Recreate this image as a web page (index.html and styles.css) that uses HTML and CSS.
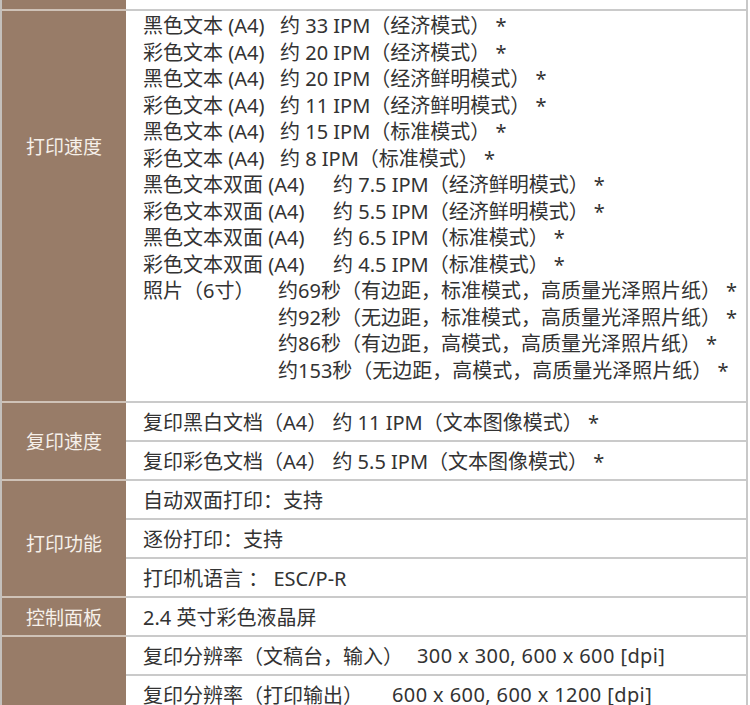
FILE: index.html
```html
<!DOCTYPE html>
<html lang="zh-CN">
<head>
<meta charset="utf-8">
<title>规格参数</title>
<link rel="stylesheet" href="styles.css">
</head>
<body>
<div class="spec">
  <div class="sec sec-top">
    <div class="label"></div>
    <div class="cells"><div class="top-cell"></div></div>
  </div>

  <div class="sec">
    <div class="label label-top">打印速度</div>
    <div class="cells">
      <div class="block">
        <div class="line"><span class="k k1">黑色文本 (A4)</span>约 33 IPM（经济模式） *</div>
        <div class="line"><span class="k k1">彩色文本 (A4)</span>约 20 IPM（经济模式） *</div>
        <div class="line"><span class="k k1">黑色文本 (A4)</span>约 20 IPM（经济鲜明模式） *</div>
        <div class="line"><span class="k k1">彩色文本 (A4)</span>约 11 IPM（经济鲜明模式） *</div>
        <div class="line"><span class="k k1">黑色文本 (A4)</span>约 15 IPM（标准模式） *</div>
        <div class="line"><span class="k k1">彩色文本 (A4)</span>约 8 IPM（标准模式） *</div>
        <div class="line"><span class="k k2">黑色文本双面 (A4)</span>约 7.5 IPM（经济鲜明模式） *</div>
        <div class="line"><span class="k k2">彩色文本双面 (A4)</span>约 5.5 IPM（经济鲜明模式） *</div>
        <div class="line"><span class="k k2">黑色文本双面 (A4)</span>约 6.5 IPM（标准模式） *</div>
        <div class="line"><span class="k k2">彩色文本双面 (A4)</span>约 4.5 IPM（标准模式） *</div>
        <div class="photo">
          <span class="k k3">照片（6寸）</span>
          <div class="photo-list">
            <div class="line">约69秒（有边距，标准模式，高质量光泽照片纸） *</div>
            <div class="line">约92秒（无边距，标准模式，高质量光泽照片纸） *</div>
            <div class="line">约86秒（有边距，高模式，高质量光泽照片纸） *</div>
            <div class="line">约153秒（无边距，高模式，高质量光泽照片纸） *</div>
          </div>
        </div>
      </div>
    </div>
  </div>

  <div class="sec">
    <div class="label">复印速度</div>
    <div class="cells">
      <div class="row">复印黑白文档（A4） 约 11 IPM（文本图像模式） *</div>
      <div class="row">复印彩色文档（A4） 约 5.5 IPM（文本图像模式） *</div>
    </div>
  </div>

  <div class="sec">
    <div class="label label-low">打印功能</div>
    <div class="cells">
      <div class="row">自动双面打印：支持</div>
      <div class="row">逐份打印：支持</div>
      <div class="row">打印机语言 ： ESC/P-R</div>
    </div>
  </div>

  <div class="sec">
    <div class="label">控制面板</div>
    <div class="cells">
      <div class="row">2.4 英寸彩色液晶屏</div>
    </div>
  </div>

  <div class="sec">
    <div class="label"></div>
    <div class="cells">
      <div class="row"><span class="k k4">复印分辨率（文稿台，输入）</span><span class="num">300 x 300, 600 x 600 [dpi]</span></div>
      <div class="row"><span class="k k5">复印分辨率（打印输出）</span><span class="num">600 x 600, 600 x 1200 [dpi]</span></div>
    </div>
  </div>
</div>
</body>
</html>
```

FILE: styles.css
```css
html, body {
  margin: 0;
  padding: 0;
  background: #ffffff;
}

body {
  font-family: "Noto Sans", "Noto Sans CJK SC", sans-serif;
  color: #333333;
  overflow: hidden;
}

.spec {
  width: 748px;
  box-sizing: border-box;
  border-left: 2px solid #c4c0bc;
  border-right: 2px solid #c8c8c8;
}

.sec {
  display: flex;
}

.label {
  width: 124px;
  flex: none;
  background: #987c68;
  color: #f6f0ea;
  font-size: 19px;
  display: flex;
  align-items: center;
  justify-content: center;
  border-top: 2px solid #cfc2b7;
}

.label-top {
  align-items: flex-start;
  padding-top: 123px;
  box-sizing: border-box;
  line-height: 26px;
}

.label-low {
  padding-top: 8px;
  box-sizing: border-box;
}

.cells {
  flex: 1;
  display: flex;
  flex-direction: column;
  border-top: 2px solid #cacaca;
}

.sec-top .label,
.sec-top .cells {
  border-top: none;
}

.top-cell {
  height: 9px;
}

.row {
  height: 37px;
  display: flex;
  align-items: center;
  padding-left: 17px;
  font-size: 20px;
  white-space: pre;
}

.row + .row {
  border-top: 2px solid #cacaca;
}

.block {
  padding: 2px 0 17px 17px;
  font-size: 20px;
  line-height: 26.5px;
}

.line {
  white-space: pre;
}

.k {
  display: inline-block;
  flex: none;
}

.k1 { width: 137px; }
.k2 { width: 190px; }
.k3 { width: 135px; }
.k4 { width: 274px; }
.k5 { width: 249px; }

.num {
  letter-spacing: 0.4px;
}

.photo {
  display: flex;
  align-items: flex-start;
}
```
